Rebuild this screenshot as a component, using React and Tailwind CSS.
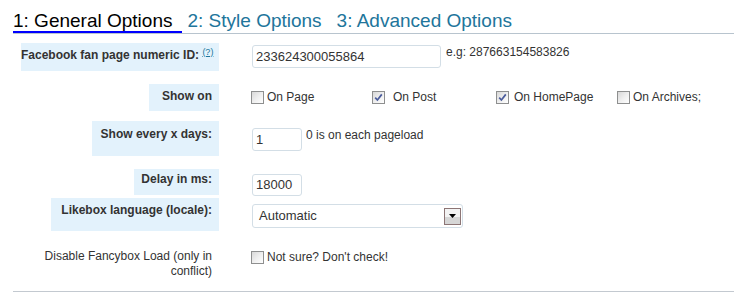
import React from 'react'

function Box({ checked }) {
  return (
    <span className="inline-flex items-center justify-center w-[13px] h-[13px] shrink-0 border border-[#8e8f8f] bg-linear-to-br from-[#d8d8d8] via-[#eeeeee] to-white">
      {checked && (
        <svg width="9" height="9" viewBox="0 0 9 9">
          <path d="M1.2 4.6 L3.4 7 L7.8 1.4" fill="none" stroke="#4b5c9c" strokeWidth="1.7" />
        </svg>
      )}
    </span>
  )
}

function Label({ w, pt, pb, children }) {
  return (
    <div className="w-[206px] shrink-0 flex justify-end">
      <span className={`${w} ${pt} ${pb} inline-block whitespace-nowrap bg-[#e3f2fc] pr-[7px] text-right font-bold text-[12px] leading-[15px] text-[#333]`}>
        {children}
      </span>
    </div>
  )
}

export default function App() {
  const tabs = ['1: General Options', '2: Style Options', '3: Advanced Options']

  return (
    <div className="w-[734px] h-[304px] overflow-hidden bg-white font-['Liberation_Sans',Arial,sans-serif] text-[#333]">
      {/* Tabs */}
      <nav className="ml-[13px] pt-[11px] flex items-end border-b border-[#b8c4ce]">
        {tabs.map((t, i) => (
          <span
            key={t}
            className={
              i === 0
                ? 'pr-[10px] mr-[5px] text-[19px] leading-[20px] text-black border-b-2 border-[#0000ff]'
                : 'pr-[10px] mr-[5px] text-[19px] leading-[20px] text-[#21759b] pb-[2px]'
            }
          >
            {t}
          </span>
        ))}
      </nav>

      <div className="ml-[13px]">
        {/* Facebook ID */}
        <div className="mt-[9px] flex items-start">
          <Label w="w-[198px]" pt="pt-[5px]" pb="pb-[8px]">
            Facebook fan page numeric ID: <sup className="text-[9px] font-normal underline text-[#21759b]">(?)</sup>
          </Label>
          <div className="ml-[33px] mt-[2px] flex items-start">
            <div className="w-[189px] h-[23px] flex items-center border border-[#d3dee6] rounded-[3px] pl-[3px] text-[13px] text-[#333]">
              233624300055864
            </div>
            <span className="ml-[5px] text-[12px] leading-[15px]">e.g: 287663154583826</span>
          </div>
        </div>

        {/* Show on */}
        <div className="mt-[13px] flex items-start">
          <Label w="w-[70px]" pt="pt-[5px]" pb="pb-[7px]">Show on</Label>
          <div className="ml-[32px] mt-[7px] flex items-center h-[13px] text-[12px] leading-[13px]">
            <div className="w-[121px] flex items-center">
              <Box />
              <span className="ml-[3px]">On Page</span>
            </div>
            <div className="w-[124px] flex items-center">
              <Box checked />
              <span className="ml-[8px]">On Post</span>
            </div>
            <div className="w-[121px] flex items-center">
              <Box checked />
              <span className="ml-[5px]">On HomePage</span>
            </div>
            <div className="flex items-center">
              <Box />
              <span className="ml-[3px]">On Archives;</span>
            </div>
          </div>
        </div>

        {/* Show every x days */}
        <div className="mt-[10px] flex items-start">
          <Label w="w-[127px]" pt="pt-[6px]" pb="pb-[14px]">Show every x days:</Label>
          <div className="ml-[33px] mt-[7px] flex items-start">
            <div className="w-[50px] h-[23px] flex items-center border border-[#d3dee6] rounded-[3px] pl-[3px] text-[13px]">
              1
            </div>
            <span className="ml-[4px] text-[12px] leading-[15px]">0 is on each pageload</span>
          </div>
        </div>

        {/* Delay */}
        <div className="mt-[13px] flex items-start">
          <Label w="w-[85px]" pt="pt-[3px]" pb="pb-[8px]">Delay in ms:</Label>
          <div className="ml-[33px] mt-[5px]">
            <div className="w-[50px] h-[22px] flex items-center border border-[#d3dee6] rounded-[3px] pl-[3px] text-[13px]">
              18000
            </div>
          </div>
        </div>

        {/* Locale */}
        <div className="mt-[2px] flex items-start">
          <Label w="w-[168px]" pt="pt-[5px]" pb="pb-[13px]">Likebox language (locale):</Label>
          <div className="ml-[33px] mt-[6px]">
            <div className="w-[211px] h-[24px] flex items-center justify-between border border-[#d3dee6] rounded-[3px] pl-[6px] pr-px text-[13px]">
              <span>Automatic</span>
              <span className="w-[17px] h-[17px] flex items-center justify-center border border-[#8c7575] bg-[linear-gradient(#f3f3f3_50%,#d6d6d6_50%)]">
                <svg width="7" height="5" viewBox="0 0 7 5">
                  <path d="M0 0 H7 L3.5 4 Z" fill="#000" />
                </svg>
              </span>
            </div>
          </div>
        </div>

        {/* Fancybox */}
        <div className="mt-[18px] flex items-start">
          <div className="w-[206px] shrink-0 flex justify-end">
            <span className="w-[190px] inline-block pr-[7px] text-right text-[12px] leading-[15px] text-[#333]">
              Disable Fancybox Load (only in conflict)
            </span>
          </div>
          <div className="ml-[32px] mt-[2px] flex items-center text-[12px] leading-[13px]">
            <Box />
            <span className="ml-[3px]">Not sure? Don't check!</span>
          </div>
        </div>

        <div className="mt-[12px] h-px bg-[#c3c9d0]" />
      </div>
    </div>
  )
}
